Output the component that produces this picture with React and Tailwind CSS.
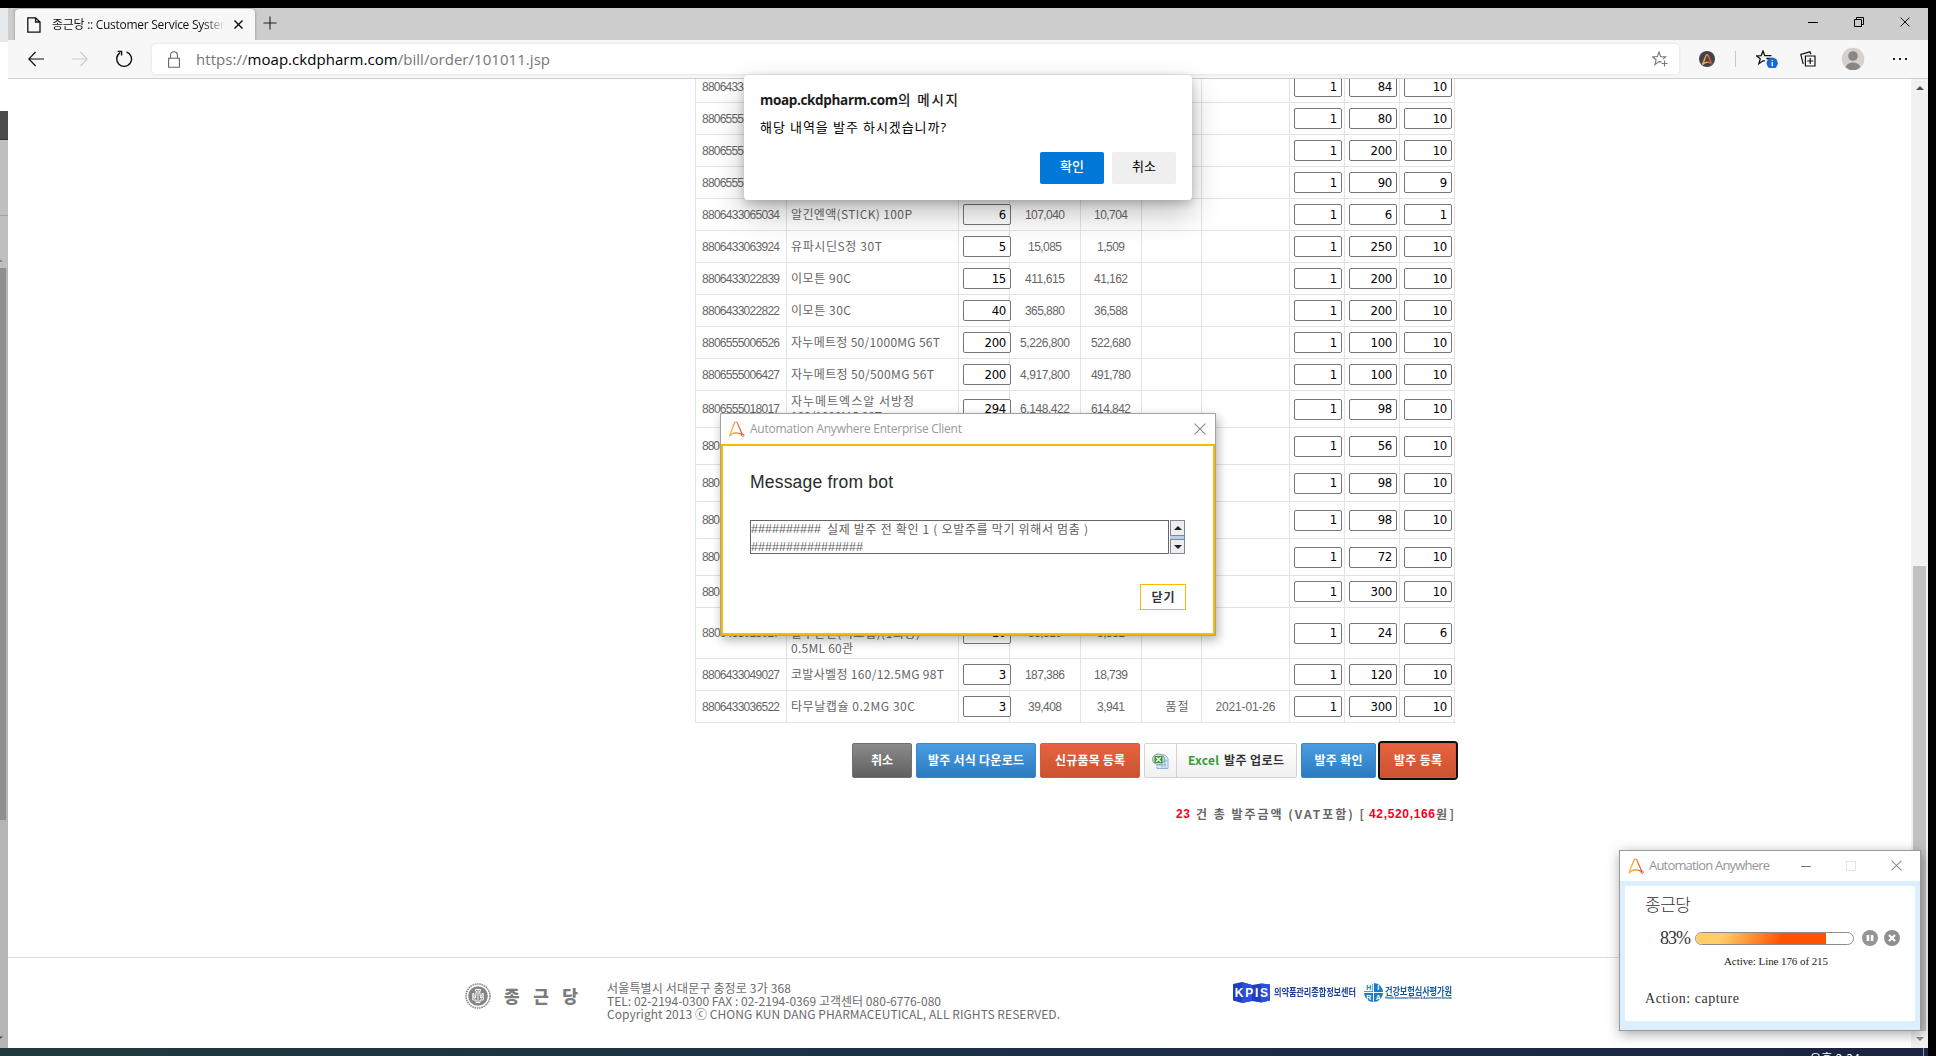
import React, { useLayoutEffect, useRef } from 'react';

// Text that is spaced to fill a given width.
function Fit({ w, children, className = '' }) {
  const inner = useRef(null);
  useLayoutEffect(() => {
    const el = inner.current;
    el.style.letterSpacing = '0px';
    const natural = el.getBoundingClientRect().width;
    const n = Math.max(1, el.textContent.length - 1);
    el.style.letterSpacing = `${(w - natural) / n}px`;
  }, [w, children]);
  return (
    <span className={`inline-block shrink-0 whitespace-pre ${className}`} style={{ width: w }}>
      <span ref={inner}>{children}</span>
    </span>
  );
}

const KR = "font-['Noto_Sans_CJK_KR',sans-serif]";
const UI = "font-['Open_Sans','Noto_Sans_CJK_KR',sans-serif]";

const rows = [
  { h: 32, code: '8806433', a: 1, b: 84, c: 10 },
  { h: 32, code: '8806555', a: 1, b: 80, c: 10 },
  { h: 32, code: '8806555', a: 1, b: 200, c: 10 },
  { h: 32, code: '8806555', a: 1, b: 90, c: 9 },
  { h: 32, code: '8806433065034', name: [['알긴엔액(STICK) 100P', 121]], q: 6, p: '107,040', v: '10,704', a: 1, b: 6, c: 1 },
  { h: 32, code: '8806433063924', name: [['유파시딘S정 30T', 91]], q: 5, p: '15,085', v: '1,509', a: 1, b: 250, c: 10 },
  { h: 32, code: '8806433022839', name: [['이모튼 90C', 60]], q: 15, p: '411,615', v: '41,162', a: 1, b: 200, c: 10 },
  { h: 32, code: '8806433022822', name: [['이모튼 30C', 60]], q: 40, p: '365,880', v: '36,588', a: 1, b: 200, c: 10 },
  { h: 32, code: '8806555006526', name: [['자누메트정 50/1000MG 56T', 149]], q: 200, p: '5,226,800', v: '522,680', a: 1, b: 100, c: 10 },
  { h: 32, code: '8806555006427', name: [['자누메트정 50/500MG 56T', 143]], q: 200, p: '4,917,800', v: '491,780', a: 1, b: 100, c: 10 },
  { h: 37, code: '8806555018017', name: [['자누메트엑스알 서방정', 123], ['100/1000MG 98T', 91]], q: 294, p: '6,148,422', v: '614,842', a: 1, b: 98, c: 10 },
  { h: 37, code: '880', a: 1, b: 56, c: 10 },
  { h: 37, code: '880', a: 1, b: 98, c: 10 },
  { h: 37, code: '880', a: 1, b: 98, c: 10 },
  { h: 37, code: '880', a: 1, b: 72, c: 10 },
  { h: 32, code: '880', a: 1, b: 300, c: 10 },
  { h: 51, code: '8806433013027', name: [['', 0], ['발누란핀(미오립)(1회용)', 129], ['0.5ML 60관', 62]], q: 10, p: '33,310', v: '3,331', a: 1, b: 24, c: 6 },
  { h: 32, code: '8806433049027', name: [['코발사벨정 160/12.5MG 98T', 153]], q: 3, p: '187,386', v: '18,739', a: 1, b: 120, c: 10 },
  { h: 32, code: '8806433036522', name: [['타무날캡슐 0.2MG 30C', 124]], q: 3, p: '39,408', v: '3,941', s: '품절', d: '2021-01-26', a: 1, b: 300, c: 10 },
];

const numWidth = (t) => [...t].reduce((s, ch) => s + (ch === ',' ? 4 : 6), 0);

const NUM = "font-['Liberation_Sans',sans-serif] text-[12px]";

function NumBox({ v }) {
  return (
    <div className="relative flex h-[21px] w-[48px] shrink-0 items-center justify-end rounded-[2px] border border-[#767676] bg-white pr-[4px] text-[13px] tracking-[-0.3px] text-black font-['DejaVu_Sans_Condensed','DejaVu_Sans',sans-serif]">
      {v}
    </div>
  );
}

function Cell({ children, className = '' }) {
  return <div className={`flex min-w-0 items-center border-r border-b border-[#e3e3e3] ${className}`}>{children}</div>;
}

function Row({ r }) {
  return (
    <div
      className="grid shrink-0 grid-cols-[91px_172px_51px_71px_61px_60px_88px_55px_55px_55px]"
      style={{ height: r.h }}
    >
      <Cell className="overflow-hidden pl-[6px]">
        <Fit w={r.code.length * 6} className={NUM}>{r.code}</Fit>
      </Cell>
      <Cell className="pl-[4px] pb-[2px]">
        <div className="flex flex-col">
          {(r.name || []).map(([t, w], i) => (
            <div key={i} className="flex h-[15px] items-center leading-[15px]">
              <Fit w={w}>{t}</Fit>
            </div>
          ))}
        </div>
      </Cell>
      <Cell className="pl-[4px]">{r.q !== undefined && <NumBox v={r.q} />}</Cell>
      <Cell className="justify-center">{r.p && <Fit w={numWidth(r.p)} className={NUM}>{r.p}</Fit>}</Cell>
      <Cell className="justify-center">{r.v && <Fit w={numWidth(r.v)} className={NUM}>{r.v}</Fit>}</Cell>
      <Cell className="justify-center pl-[11px] pb-[2px]">{r.s && <Fit w={23}>{r.s}</Fit>}</Cell>
      <Cell className="justify-center">{r.d && <Fit w={60} className={NUM}>{r.d}</Fit>}</Cell>
      <Cell className="pl-[4px]"><NumBox v={r.a} /></Cell>
      <Cell className="pl-[4px]"><NumBox v={r.b} /></Cell>
      <Cell className="pl-[4px]"><NumBox v={r.c} /></Cell>
    </div>
  );
}

function ALogo({ className, id, sw = 1.2 }) {
  return (
    <svg viewBox="0 0 16 16" className={className} fill="none">
      <defs>
        <linearGradient id={id} x1="0" y1="0" x2="1" y2="0">
          <stop offset="0" stopColor="#f6bf45" />
          <stop offset="0.5" stopColor="#ee8a3a" />
          <stop offset="1" stopColor="#d9532c" />
        </linearGradient>
      </defs>
      <path d="M.8 15.2 5.9 2.2C6.4.6 8.3.6 8.9 2.2L13.6 13" stroke={`url(#${id})`} strokeWidth={sw} />
      <path d="M.8 15.2C4 11.6 8.2 11 13.4 13.4" stroke={`url(#${id})`} strokeWidth={sw} />
      <circle cx="14.2" cy="14.2" r="1.2" stroke="#d9532c" strokeWidth="1" />
    </svg>
  );
}

function Cross({ className, sw = 1.1 }) {
  return (
    <svg viewBox="0 0 12 12" className={className} fill="none" stroke="currentColor" strokeWidth={sw}>
      <path d="M.6.6 11.4 11.4M11.4.6.6 11.4" />
    </svg>
  );
}

function TabBar() {
  return (
    <div className="flex h-8 shrink-0 items-stretch bg-[#cdcdcd] pl-[7px]">
      <div className="mt-[1px] flex w-[240px] items-center rounded-t-[4px] bg-[#f7f7f7] pl-[12px] shadow-[0_0_3px_rgba(0,0,0,0.35)]">
        <svg viewBox="0 0 14 16" className="h-4 w-[14px] shrink-0" fill="none" stroke="#111" strokeWidth="1.3">
          <path d="M.8.8H8.6L13 5V15.2H.8ZM8.6.8V5H13" />
        </svg>
        <div className={`ml-[11px] w-[174px] shrink-0 overflow-hidden text-[12px] leading-[18px] text-[#111] ${UI} [mask-image:linear-gradient(to_right,black_152px,transparent_173px)]`}>
          <Fit w={179}>종근당 :: Customer Service System</Fit>
        </div>
        <Cross sw={1.9} className="ml-[8px] h-[9px] w-[9px] shrink-0 text-[#111]" />
      </div>
      <div className="flex w-8 items-center justify-center">
        <svg viewBox="0 0 14 14" className="h-[14px] w-[14px] -translate-x-[1px] -translate-y-[1px]" stroke="#222" strokeWidth="1.1"><path d="M7 .5V13.5M.5 7H13.5" /></svg>
      </div>
      <div className="ml-auto flex -translate-y-[2px] items-center gap-[36px] pr-[18px]">
        <svg viewBox="0 0 10 10" className="h-[10px] w-[10px]" stroke="#000"><path d="M0 5.5H10" /></svg>
        <svg viewBox="0 0 10 10" className="h-[10px] w-[10px]" fill="none" stroke="#000"><path d="M.5 2.5H7.5V9.5H.5ZM2.5 2.5V.5H9.5V7.5H7.5" /></svg>
        <Cross className="h-[10px] w-[10px] text-black" />
      </div>
    </div>
  );
}

function Toolbar() {
  return (
    <div className="flex h-[39px] shrink-0 items-center border-b border-[#cfcfcf] bg-[#f7f7f7] pl-[20px]">
      <svg viewBox="0 0 16 16" className="h-4 w-4 shrink-0" fill="none" stroke="#111" strokeWidth="1.2"><path d="M16 8H.8M7.6 1 .8 8 7.6 15" /></svg>
      <svg viewBox="0 0 16 16" className="ml-[28px] h-4 w-4 shrink-0" fill="none" stroke="#cbcbcb" strokeWidth="1.2"><path d="M0 8H15.2M8.4 1 15.2 8 8.4 15" /></svg>
      <svg viewBox="0 0 18 18" className="ml-[27px] h-[18px] w-[18px] shrink-0" fill="none" stroke="#111" strokeWidth="1.4">
        <path d="M11.6 2A7.4 7.4 0 1 1 5.2 2.7" />
        <path d="M2.6 1.4H6.6V5.4" />
      </svg>
      <div className="ml-[19px] flex h-[30px] w-[1527px] shrink-0 items-center rounded-[4px] bg-white pl-[16px] shadow-[0_0_3px_rgba(0,0,0,0.12)]">
        <svg viewBox="0 0 12 17" className="h-[17px] w-3 shrink-0" fill="none" stroke="#666" strokeWidth="1.1"><path d="M.6 7.2H11.4V16.2H.6ZM2.6 7V4C2.6-.4 9.4-.4 9.4 4V7" /></svg>
        <div className={`ml-[16px] text-[15px] text-[#767676] ${UI}`}>
          <Fit w={354}>https://<span className="text-black">moap.ckdpharm.com</span>/bill/order/101011.jsp</Fit>
        </div>
        <svg viewBox="0 0 16 16" className="mr-[11px] ml-auto h-4 w-4" fill="none" stroke="#777" strokeWidth="1.1">
          <path d="M9.6 10.9 7 10.6 2.9 13.6 4.2 8.8.4 5.8 5.3 5.6 7 1 8.7 5.6 13.6 5.8 11 8M12.5 9.5V15.5M9.5 12.5H15.5" />
        </svg>
      </div>
      <div className="ml-[20px] flex h-4 w-4 items-center justify-center rounded-full bg-[#41414f]">
        <ALogo id="ext" sw={2} className="h-[11px] w-[11px]" />
      </div>
      <div className="ml-[20px] h-4 w-px bg-[#c9c9c9]" />
      <svg viewBox="0 0 24 18" className="ml-[20px] h-[18px] w-6 shrink-0" fill="none">
        <path d="M9 10.9 7 10.8 2.9 13.6 4.2 8.8.4 5.8 5.3 5.6 7 1 8.7 5.6H15.5M10.3 8.5H15" stroke="#111" strokeWidth="1.3" />
        <circle cx="16.2" cy="13.2" r="5.6" fill="#1668d8" />
        <path d="M16.2 12V16.2M16.2 10V11.1" stroke="#fff" strokeWidth="1.3" />
      </svg>
      <svg viewBox="0 0 16 16" className="ml-[20px] h-4 w-4 shrink-0" fill="none" stroke="#111" strokeWidth="1.2">
        <path d="M5.4 5H15V15H5.4ZM10.2 7V13M7.2 10H13.2M3.6 12.6 3 12.3 .8 3.5 10 .8 10.8 3.2" />
      </svg>
      <svg viewBox="0 0 24 24" className="ml-[25px] h-6 w-6 shrink-0">
        <circle cx="12" cy="12" r="11.3" fill="#d4d1ce" />
        <circle cx="12" cy="9" r="4.8" fill="#8a8683" />
        <path d="M4.8 20.4C5.6 14 18.4 14 19.2 20.4A11 11 0 0 1 4.8 20.4Z" fill="#8a8683" />
      </svg>
      <svg viewBox="0 0 14 2" className="ml-[28px] h-[2px] w-[14px] shrink-0" fill="#222"><path d="M0 0H2V2H0ZM6 0H8V2H6ZM12 0H14V2H12Z" /></svg>
    </div>
  );
}

function Buttons() {
  const base = 'flex h-[35px] shrink-0 items-center rounded-[2px] text-[12px] font-bold';
  const solid = 'justify-center pb-[2px] text-white';
  const blue = 'bg-linear-to-b from-[#4a9de2] to-[#2c7bc0] border border-[#3a86c8]';
  const red = 'bg-linear-to-b from-[#e8633f] to-[#cb5230] border border-[#d85a36]';
  return (
    <div className="mt-[20px] ml-[844px] flex">
      <div className={`${base} ${solid} w-[60px] border border-[#707070] bg-linear-to-b from-[#8b8b8b] to-[#606060]`}><Fit w={22}>취소</Fit></div>
      <div className={`${base} ${solid} ${blue} ml-[4px] w-[120px]`}><Fit w={96}>발주 서식 다운로드</Fit></div>
      <div className={`${base} ${solid} ${red} ml-[4px] w-[100px]`}><Fit w={70}>신규품목 등록</Fit></div>
      <div className={`${base} ml-[4px] w-[153px] border border-[#d3d3d3] bg-linear-to-b from-white to-[#f0f0f0] text-[#333]`}>
        <div className="flex h-full w-[32px] items-center justify-center border-r border-[#d3d3d3]">
          <svg viewBox="0 0 17 16" className="h-4 w-[17px]">
            <path d="M5 2H13L16 5V15.5H5Z" fill="#dbe8f8" stroke="#8fb0dc" />
            <path d="M7 12H14M10 10V14.5M13 6V14.5M11 8H15" stroke="#8fb0dc" />
            <ellipse cx="6.5" cy="6.3" rx="6" ry="5.3" fill="#cfe3c8" stroke="#7aa878" />
            <rect x="2.5" y="3" width="8" height="7" fill="#3f8f4a" />
            <path d="M4.2 4.2 8.8 8.8M8.8 4.2 4.2 8.8" stroke="#fff" strokeWidth="1.3" />
          </svg>
        </div>
        <div className="ml-[11px] flex gap-[5px] pb-[2px]">
          <Fit w={31} className="text-[#33a033]">Excel</Fit>
          <Fit w={60}>발주 업로드</Fit>
        </div>
      </div>
      <div className={`${base} ${solid} ${blue} ml-[4px] w-[75px]`}><Fit w={48}>발주 확인</Fit></div>
      <div className={`${base} ${solid} ${red} ml-[4px] w-[76px] outline-2 outline-[#101010]`}><Fit w={48}>발주 등록</Fit></div>
    </div>
  );
}

function Total() {
  const red = "text-[#f5001e] font-['Liberation_Sans',sans-serif]";
  return (
    <div className="mt-[26px] mr-[457px] flex h-5 items-center justify-end text-[12px] font-bold text-[#666]">
      <Fit w={14} className={red}>23</Fit>
      <Fit w={168} className="ml-[6px]">건 총 발주금액 (VAT포함) [</Fit>
      <Fit w={66} className={`ml-[5px] ${red}`}>42,520,166</Fit>
      <Fit w={18} className="ml-[1px]">원]</Fit>
    </div>
  );
}

function Footer() {
  return (
    <div className="flex h-[91px] shrink-0 items-start border-t border-[#dedede] pl-[457px]">
      <svg viewBox="0 0 26 26" className="mt-[25px] h-[26px] w-[26px] shrink-0">
        <circle cx="13" cy="13" r="12" fill="none" stroke="#8a8a8a" strokeWidth="1.6" strokeDasharray="1.6 .7" />
        <circle cx="13" cy="13" r="9.8" fill="#858585" />
        <path d="M10.5 6.5H15.5V8H14.6L15.6 15H17V10.5H18.2V17H15V19.5H11V17H7.8V10.5H9V15H10.4L11.4 8H10.5Z" fill="none" stroke="#fff" strokeWidth="1" />
        <path d="M13 7V19" stroke="#fff" />
      </svg>
      <div className="mt-[24px] ml-[13px] flex h-[26px] w-[74px] items-center justify-between text-[17px] font-black leading-none text-[#7c7c7c]">
        <span>종</span><span>근</span><span>당</span>
      </div>
      <div className="mt-[23px] ml-[29px] flex w-[460px] shrink-0 flex-col text-[12px] leading-[13px] text-[#6c6c6c]">
        <Fit w={184}>서울특별시 서대문구 충정로 3가 368</Fit>
        <Fit w={334}>TEL: 02-2194-0300 FAX : 02-2194-0369 고객센터 080-6776-080</Fit>
        <Fit w={453}>Copyright 2013 ⓒ CHONG KUN DANG PHARMACEUTICAL, ALL RIGHTS RESERVED.</Fit>
      </div>
      <div className="relative mt-[24px] ml-[166px] h-[21px] w-[37px] shrink-0">
        <svg viewBox="0 0 37 21" className="absolute inset-0 h-[21px] w-[37px]">
          <path d="M0 2 9 0 19 3 28 1.5 37 2.5V18.5L28 20.5 19 19 9 21 0 18.5Z" fill="#1f3fc0" />
          <path d="M9 0 19 3V19L9 21ZM28 1.5 37 2.5V18.5L28 20.5Z" fill="#2b50dc" />
        </svg>
        <div className="absolute inset-0 flex items-center justify-around px-[1px] text-[12px] font-bold text-white font-['Liberation_Sans',sans-serif]">
          <span>K</span><span>P</span><span>I</span><span>S</span>
        </div>
      </div>
      <div className="mt-[24px] ml-[4px] scale-y-[1.3] text-[8.2px] font-bold leading-[18px] text-[#1c3f94]"><Fit w={82}>의약품관리종합정보센터</Fit></div>
      <div className="mt-[24px] ml-[8px] flex h-[21px] items-center">
        <div className="relative h-[19px] w-[19px]">
          <svg viewBox="0 0 19 19" className="absolute inset-0 h-[19px] w-[19px]" fill="#1a7cc4">
            <path d="M10 0A9.3 9.3 0 0 1 19 9H10ZM10 10H19A9.3 9.3 0 0 1 10 19ZM9 10V19A9.3 9.3 0 0 1 0 10ZM0 8.3H9V9H0ZM8.4 1H9V9H8.4Z" />
          </svg>
          <div className="absolute inset-0 grid grid-cols-2 grid-rows-2 place-items-center text-[7px] font-bold leading-none text-white font-['Liberation_Sans',sans-serif]">
            <span className="text-[#1a7cc4]">H</span><span>I</span><span>R</span><span>A</span>
          </div>
        </div>
        <div className="ml-[2px] flex flex-col text-[#12579c]">
          <Fit w={67} className="scale-y-[1.2] text-[8.2px] font-bold leading-[12px]">건강보험심사평가원</Fit>
          <Fit w={67} className="text-[3.4px] font-bold leading-[5px] font-['Liberation_Sans',sans-serif]">Health Insurance Review &amp; Assessment Service</Fit>
        </div>
      </div>
    </div>
  );
}

function ConfirmDialog() {
  return (
    <div className={`absolute top-[75px] left-[744px] flex h-[125px] w-[448px] flex-col rounded-[4px] bg-white px-4 text-black shadow-[0_13px_30px_rgba(0,0,0,0.25),0_3px_8px_rgba(0,0,0,0.2)] ${UI}`}>
      <div className="mt-[15px] flex h-5 items-center text-[13.5px] text-[#1b1b1b]">
        <Fit w={138} className="font-bold">moap.ckdpharm.com</Fit>
        <Fit w={60} className="font-medium">의 메시지</Fit>
      </div>
      <div className="mt-[8px] flex h-5 items-center text-[13px]"><Fit w={186}>해당 내역을 발주 하시겠습니까?</Fit></div>
      <div className="mt-[14px] flex justify-end gap-2 text-[13px]">
        <div className="flex h-8 w-16 items-center justify-center rounded-[2px] bg-[#0078d7] pb-[2px] font-medium text-white"><Fit w={24}>확인</Fit></div>
        <div className="flex h-8 w-16 items-center justify-center rounded-[2px] bg-[#efefef] pb-[2px] text-black"><Fit w={24}>취소</Fit></div>
      </div>
    </div>
  );
}

function BotDialog() {
  return (
    <div className="absolute top-[413px] left-[720px] flex h-[223px] w-[496px] flex-col border border-[#a3a3a3] bg-white shadow-[2px_4px_10px_rgba(0,0,0,0.3)]">
      <div className="flex h-[30px] shrink-0 items-center pr-[9px] pb-[1px] pl-[7px]">
        <ALogo id="bot" className="h-4 w-[17px]" />
        <div className={`ml-[5px] text-[12px] text-[#999] ${UI}`}><Fit w={212}>Automation Anywhere Enterprise Client</Fit></div>
        <Cross className="ml-auto h-3 w-3 text-[#888]" />
      </div>
      <div className="flex flex-1 flex-col border-2 border-[#fdb900] px-[27px]">
        <div className="mt-[24px] h-6 text-[17.5px] leading-6 text-[#2b2b2b] font-['Liberation_Sans',sans-serif]"><Fit w={143}>Message from bot</Fit></div>
        <div className="mt-[26px] flex h-[34px]">
          <div className="flex h-[34px] w-[419px] flex-col overflow-hidden border border-[#646469] text-[12px] text-[#606060]">
            <div className="flex h-[17px] shrink-0 items-center gap-[6px]">
              <Fit w={70} className="font-['Liberation_Sans',sans-serif] text-[12.5px]">##########</Fit>
              <Fit w={261} className="pb-[1px]">실제 발주 전 확인 1 ( 오발주를 막기 위해서 멈춤 )</Fit>
            </div>
            <div className="flex h-[18px] shrink-0 items-center"><Fit w={112} className="font-['Liberation_Sans',sans-serif] text-[12.5px]">################</Fit></div>
          </div>
          <div className="ml-px flex w-[15px] flex-col justify-between border-t border-r border-[#7a8a99] bg-[#b8cfe5]">
            <div className="flex h-[15px] items-center justify-center border-b border-l border-[#7a8a99] bg-[#eee]"><svg viewBox="0 0 8 4" className="h-1 w-2"><path d="M4 0 8 4H0Z" fill="#222" /></svg></div>
            <div className="flex h-[15px] items-center justify-center border border-r-0 border-[#7a8a99] bg-[#eee]"><svg viewBox="0 0 8 4" className="h-1 w-2"><path d="M0 0H8L4 4Z" fill="#222" /></svg></div>
          </div>
        </div>
        <div className="mt-[30px] flex justify-end">
          <div className="flex h-[26px] w-[46px] items-center justify-center border border-[#fdb900] pb-[1px] text-[12px] font-bold text-[#333]"><Fit w={23}>닫기</Fit></div>
        </div>
      </div>
    </div>
  );
}

function RunnerWindow() {
  const serif = "font-['Liberation_Serif',serif]";
  return (
    <div className="absolute top-[850px] left-[1619px] flex h-[181px] w-[302px] flex-col border border-[#9a9a9a] bg-white shadow-[1px_3px_12px_rgba(0,0,0,0.35)]">
      <div className="flex h-[30px] shrink-0 items-center pr-[18px] pb-[1px] pl-[8px] text-[#8a8a8a]">
        <ALogo id="run" className="h-4 w-4" />
        <div className={`ml-[5px] text-[13px] text-[#959595] ${UI}`}><Fit w={121}>Automation Anywhere</Fit></div>
        <div className="ml-auto flex items-center gap-[35px]">
          <svg viewBox="0 0 10 10" className="h-[10px] w-[10px]" stroke="#777"><path d="M0 5.5H10" /></svg>
          <div className="h-[10px] w-[10px] border border-[#e4e4e4]" />
          <Cross className="h-[11px] w-[11px]" />
        </div>
      </div>
      <div className="flex flex-1 flex-col border-x-[5px] border-t-[5px] border-b-[9px] border-[#dceffe] bg-white pl-[20px]">
        <div className="mt-[8px] h-5 text-[17px] font-light leading-5 text-[#333]"><Fit w={46}>종근당</Fit></div>
        <div className="mt-[14px] flex h-5 items-center pl-[15px]">
          <Fit w={31} className={`text-[18px] text-[#333] ${serif}`}>83%</Fit>
          <div className="ml-[4px] h-[13px] w-[159px] overflow-hidden rounded-full border border-[#8c8c8c] bg-white">
            <div className="h-full w-[130px] bg-[linear-gradient(115deg,#ffcf66_20%,#ff5200_66%)]" />
          </div>
          <svg viewBox="0 0 16 16" className="ml-[8px] h-4 w-4"><circle cx="8" cy="8" r="8" fill="#959595" /><path d="M4.6 5H7.2V11H4.6ZM8.8 5H11.4V11H8.8Z" fill="#fff" /></svg>
          <svg viewBox="0 0 16 16" className="ml-[6px] h-4 w-4"><circle cx="8" cy="8" r="8" fill="#8f8f8f" /><path d="M5 5 11 11M11 5 5 11" stroke="#fff" strokeWidth="2.2" /></svg>
        </div>
        <div className={`mt-[5px] ml-[79px] h-4 text-[11px] leading-4 text-[#222] ${serif}`}><Fit w={104}>Active: Line 176 of 215</Fit></div>
        <div className={`mt-[20px] h-5 text-[14px] leading-5 text-[#333] ${serif}`}><Fit w={94}>Action: capture</Fit></div>
      </div>
    </div>
  );
}

export default function App() {
  return (
    <div className={`relative flex h-[1056px] w-[1936px] flex-col overflow-hidden bg-black pt-2 ${KR}`}>
      <div className="flex h-[1040px] shrink-0">
        {/* edge of the window behind */}
        <div className="flex w-2 shrink-0 flex-col bg-[#b5b5b5]">
          <div className="h-[34px] bg-[#e4e9ed]" />
          <div className="h-[69px] bg-white" />
          <div className="h-[29px] border-b border-[#333] bg-[#4c4c4c]" />
          <div className="h-[76px] border-b border-[#a3a3a3] bg-[#bfbfbf]" />
          <div className="flex h-[52px] items-end bg-[#bfbfbf] pb-[6px]">
            <svg viewBox="0 0 4 3" className="h-[3px] w-[3px]"><path d="M0 0 4 3H0Z" fill="#777" /></svg>
          </div>
          <div className="h-[552px] w-[6px] bg-[#909090]" />
          <svg viewBox="0 0 4 3" className="mt-[216px] h-[3px] w-[3px]"><path d="M0 0H4L0 3Z" fill="#444" /></svg>
        </div>
        <div className="flex w-[1920px] shrink-0 flex-col bg-white">
          <TabBar />
          <Toolbar />
          <div className="flex min-h-0 flex-1">
            <div className="flex min-w-0 flex-1 flex-col overflow-hidden">
              <div className="h-[644px] shrink-0 overflow-hidden">
                <div className="-mt-2 ml-[687px] flex w-[760px] flex-col border-l border-[#e3e3e3] text-[12px] text-[#666]">
                  {rows.map((r, i) => <Row key={i} r={r} />)}
                </div>
              </div>
              <Buttons />
              <Total />
              <div className="flex-1" />
              <Footer />
            </div>
            <div className="flex w-[17px] shrink-0 flex-col items-center bg-[#f1f1f1]">
              <svg viewBox="0 0 8 4" className="mt-[7px] h-1 w-2"><path d="M4 0 8 4H0Z" fill="#505050" /></svg>
              <div className="mt-[476px] h-[465px] w-[13px] bg-[#c1c1c1]" />
              <svg viewBox="0 0 8 4" className="mt-[6px] h-1 w-2"><path d="M0 0H8L4 4Z" fill="#8b8b8b" /></svg>
            </div>
          </div>
        </div>
      </div>
      <div className="mr-2 flex h-2 shrink-0 justify-end overflow-hidden bg-linear-to-r from-[#20383c] via-[#1b2f45] to-[#1b2440]">
        <div className="mt-[4px] text-[12px] leading-[12px] text-white"><Fit w={50}>오후 2:34</Fit></div>
        <div className="mr-[4px] ml-[63px] w-px bg-[#8a93a8]" />
      </div>
      <ConfirmDialog />
      <BotDialog />
      <RunnerWindow />
    </div>
  );
}
